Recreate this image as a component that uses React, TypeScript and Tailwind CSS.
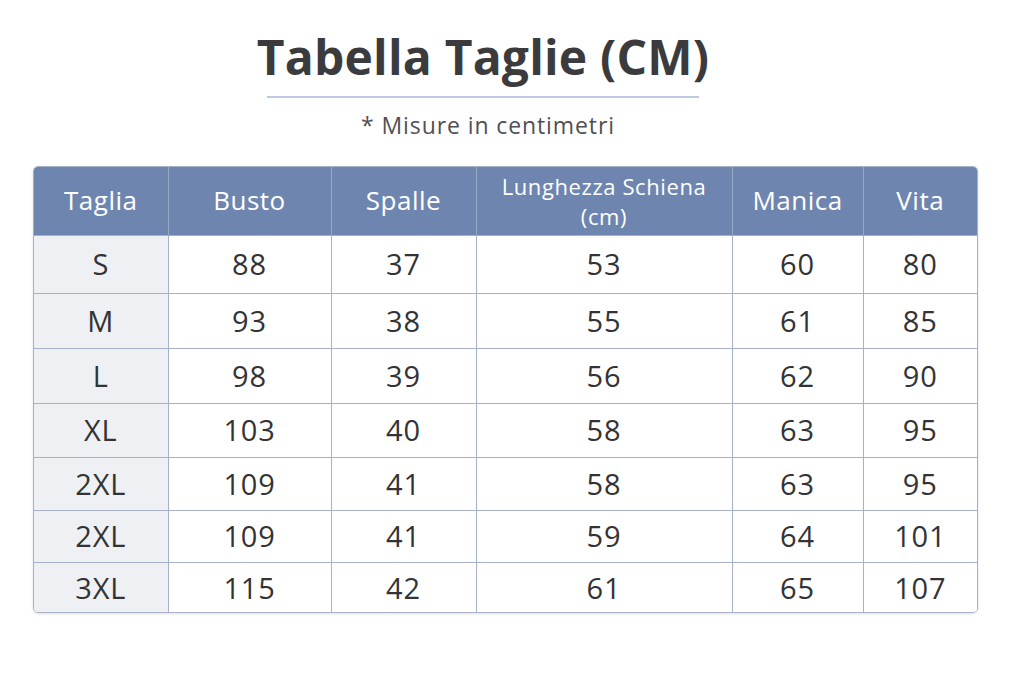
const headers = ["Taglia", "Busto", "Spalle", "Lunghezza Schiena", "Manica", "Vita"]

const rows: [string, string, string, string, string, string][] = [
  ["S", "88", "37", "53", "60", "80"],
  ["M", "93", "38", "55", "61", "85"],
  ["L", "98", "39", "56", "62", "90"],
  ["XL", "103", "40", "58", "63", "95"],
  ["2XL", "109", "41", "58", "63", "95"],
  ["2XL", "109", "41", "59", "64", "101"],
  ["3XL", "115", "42", "61", "65", "107"],
]

const rowHeights = ["h-[58px]", "h-[55px]", "h-[55px]", "h-[54px]", "h-[53px]", "h-[52px]", "h-[50px]"]

export default function App() {
  return (
    <div
      className="w-[1024px] h-[683px] bg-white flex flex-col"
      style={{ fontFamily: '"Open Sans", "Noto Sans", sans-serif' }}
    >
      {/* Titolo */}
      <div className="flex flex-col items-center pr-[58px]">
        <h1 className="mt-[26px] text-[48px] leading-[62px] font-bold text-[#3b3b3e] tracking-[0.2px]">
          Tabella Taglie (CM)
        </h1>
        <div className="mt-[8px] w-[432px] h-[2px] bg-[#bccbe2]" />
        <p className="mt-[12px] pl-[10px] text-[23px] leading-[30px] text-[#505053] tracking-[0.9px]">
          * Misure in centimetri
        </p>
      </div>

      {/* Tabella */}
      <div className="mt-[26px] ml-[33px] w-[945px] rounded-[5px] border border-[#a6b1c5] overflow-hidden shadow-[0_1px_3px_rgba(0,0,0,0.12)]">
        <table className="w-full border-collapse table-fixed">
          <colgroup>
            <col className="w-[134px]" />
            <col className="w-[163px]" />
            <col className="w-[145px]" />
            <col className="w-[256px]" />
            <col className="w-[131px]" />
            <col />
          </colgroup>
          <thead>
            <tr className="h-[68px] bg-[#6e86af]">
              {headers.map((h, i) => (
                <th
                  key={h}
                  className="font-normal text-white text-center border-l border-[#97a8c4] first:border-l-0 text-[26px] tracking-[0.5px]"
                >
                  {i === 3 ? (
                    <span className="flex flex-col text-[22px] leading-[30px] tracking-[0.6px]">
                      <span>{h}</span>
                      <span>(cm)</span>
                    </span>
                  ) : (
                    h
                  )}
                </th>
              ))}
            </tr>
          </thead>
          <tbody>
            {rows.map((r, ri) => (
              <tr key={ri} className={rowHeights[ri]}>
                {r.map((v, ci) => (
                  <td
                    key={ci}
                    className={
                      "text-center text-[29px] text-[#333335] tracking-[0.8px] border-t border-l border-[#a6b1c5] first:border-l-0 " +
                      (ci === 0 ? "bg-[#eef0f3]" : "bg-white")
                    }
                  >
                    {v}
                  </td>
                ))}
              </tr>
            ))}
          </tbody>
        </table>
      </div>
    </div>
  )
}
